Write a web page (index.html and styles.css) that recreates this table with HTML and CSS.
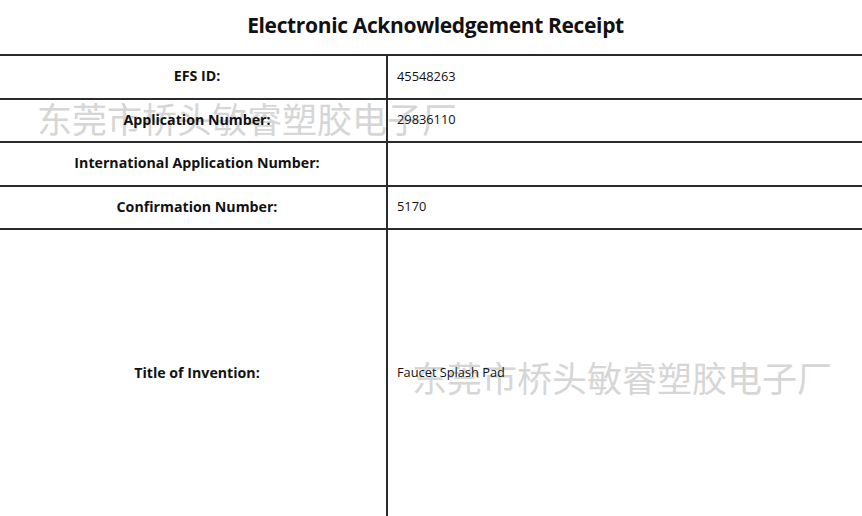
FILE: index.html
```
<!DOCTYPE html>
<html>
<head>
<meta charset="utf-8">
<link rel="stylesheet" href="styles.css">
</head>
<body>
<div class="page">
  <div class="watermark wm1">东莞市桥头敏睿塑胶电子厂</div>
  <div class="watermark wm2">东莞市桥头敏睿塑胶电子厂</div>
  <h1 class="title">Electronic Acknowledgement Receipt</h1>
  <div class="table">
    <div class="row"><div class="label">EFS ID:</div><div class="value">45548263</div></div>
    <div class="row"><div class="label">Application Number:</div><div class="value">29836110</div></div>
    <div class="row"><div class="label">International Application Number:</div><div class="value"></div></div>
    <div class="row"><div class="label">Confirmation Number:</div><div class="value">5170</div></div>
    <div class="row tall"><div class="label">Title of Invention:</div><div class="value">Faucet Splash Pad</div></div>
  </div>
</div>
</body>
</html>
```
FILE: styles.css
```
html, body {
  margin: 0;
  padding: 0;
  background: #fff;
}
.page {
  position: relative;
  width: 862px;
  height: 516px;
  overflow: hidden;
  font-family: "Open Sans", "Noto Sans", sans-serif;
  color: #111;
}
.title {
  position: relative;
  z-index: 1;
  margin: 0;
  height: 54px;
  line-height: 50px;
  text-align: center;
  font-size: 21px;
  font-weight: 700;
  letter-spacing: -0.35px;
  padding-left: 9px;
}
.table {
  position: relative;
  z-index: 1;
  display: flex;
  flex-direction: column;
}
.row {
  display: grid;
  grid-template-columns: 388px 1fr;
  height: 43.5px;
  box-sizing: border-box;
  border-top: 2px solid #2b2b2b;
}
.row.tall {
  height: 288px;
}
.label {
  display: flex;
  align-items: center;
  justify-content: center;
  padding-left: 8px;
  padding-bottom: 2px;
  font-size: 14.2px;
  font-weight: 700;
  border-right: 2px solid #2b2b2b;
}
.value {
  display: flex;
  align-items: center;
  padding-left: 9px;
  padding-bottom: 2px;
  font-size: 12.8px;
}
.watermark {
  position: absolute;
  z-index: 0;
  font-family: "Noto Sans CJK SC", sans-serif;
  font-size: 35px;
  line-height: 1;
  color: #d6d6d6;
  white-space: nowrap;
  pointer-events: none;
}
.wm1 {
  left: 37px;
  top: 100px;
}
.wm2 {
  left: 412px;
  top: 359px;
}
```
